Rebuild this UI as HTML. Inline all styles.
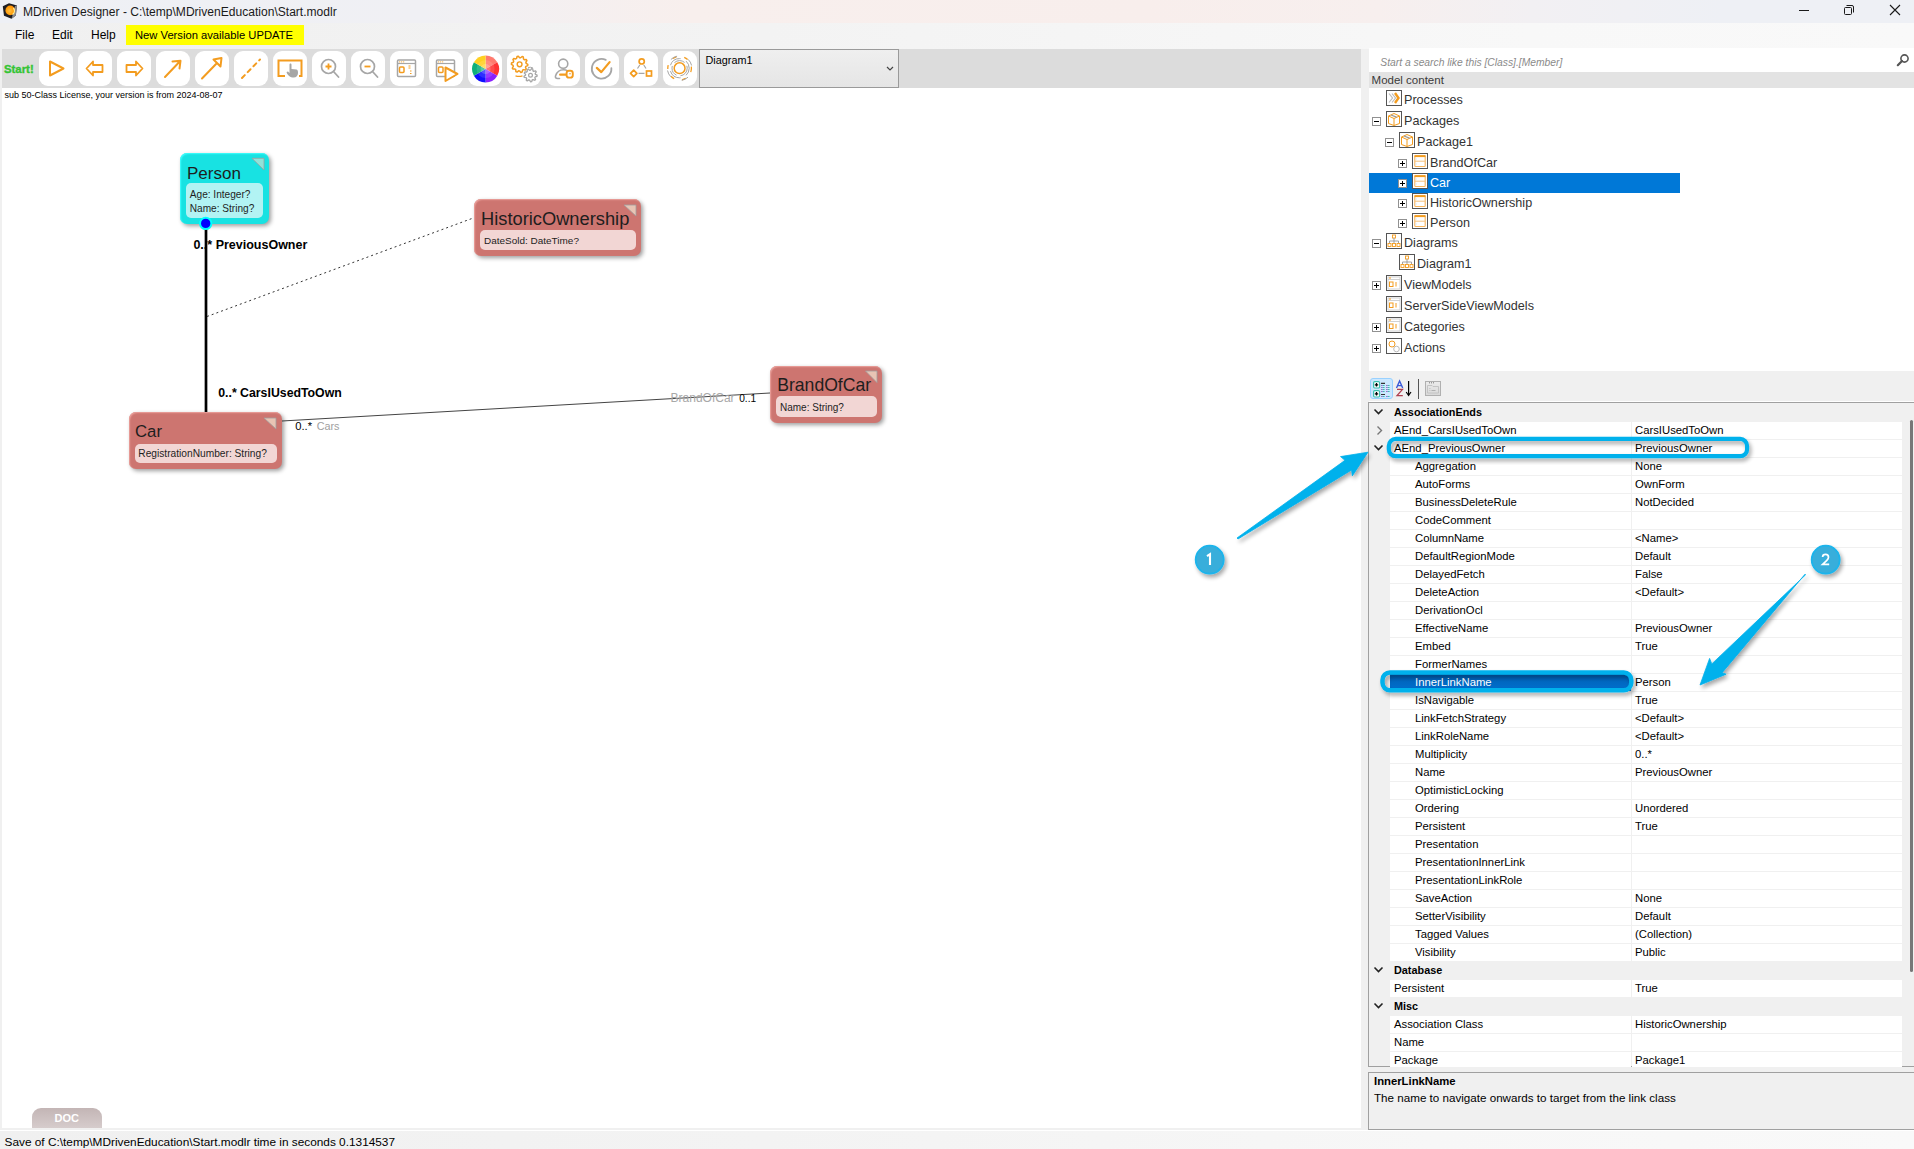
<!DOCTYPE html><html><head><meta charset="utf-8"><style>
html,body{margin:0;padding:0;}
body{width:1914px;height:1149px;overflow:hidden;position:relative;background:#fff;font-family:"Liberation Sans",sans-serif;}
.t{position:absolute;white-space:pre;}
.r{position:absolute;}
svg{position:absolute;overflow:visible;}
</style></head><body>
<div class="r" style="left:0px;top:0px;width:1914px;height:23px;background:linear-gradient(90deg,#eef0f5 0%,#f0f0f4 22%,#f8efed 36%,#f8eeec 60%,#f7efee 72%,#f2f0f3 80%,#eef0f5 90%,#eef0f5 100%);"></div>
<div class="t" style="left:23px;top:6px;font-size:12.07px;line-height:12.07px;color:#1a1a1a;font-weight:400;font-style:normal;">MDriven Designer - C:\temp\MDrivenEducation\Start.modlr</div>
<svg style="left:0;top:0" width="24" height="23" viewBox="0 0 24 23"><defs><radialGradient id="sph" cx="0.45" cy="0.55" r="0.6"><stop offset="0" stop-color="#ffc040"/><stop offset="0.6" stop-color="#ffa010"/><stop offset="1" stop-color="#ff8a00"/></radialGradient></defs><polygon points="2.8,6.2 9,3.2 17,5.4 15.8,15.5 11.5,18.8 4,15.8" fill="#1e1e22"/><polygon points="15,6 17,5.4 15.8,15.5 11.5,18.8 12.5,15.5" fill="#8a8a8e"/><circle cx="10.2" cy="10.4" r="4.8" fill="url(#sph)"/><path d="M13.5 8 A4.8 4.8 0 0 1 12.5 14.6" fill="none" stroke="#fff3a0" stroke-width="1.3"/></svg>
<div class="r" style="left:1799px;top:10px;width:10px;height:1px;background:#1a1a1a;"></div>
<svg style="left:1843px;top:4px" width="12" height="12" viewBox="0 0 12 12"><rect x="1.5" y="3.5" width="7" height="7" rx="1" fill="none" stroke="#1a1a1a" stroke-width="1"/><path d="M3.5 1.5 H9 a1.5 1.5 0 0 1 1.5 1.5 V8.5" fill="none" stroke="#1a1a1a" stroke-width="1"/></svg>
<svg style="left:1889px;top:4px" width="12" height="12" viewBox="0 0 12 12"><path d="M1 1 L11 11 M11 1 L1 11" stroke="#1a1a1a" stroke-width="1.1"/></svg>
<div class="r" style="left:0px;top:23px;width:1914px;height:26px;background:linear-gradient(90deg,#f0f0f0,#f3f3f3 40%,#f8f8f8 80%,#f9f9f9);"></div>
<div class="t" style="left:15px;top:29px;font-size:12px;line-height:12px;color:#000;font-weight:400;font-style:normal;">File</div>
<div class="t" style="left:52px;top:29px;font-size:12px;line-height:12px;color:#000;font-weight:400;font-style:normal;">Edit</div>
<div class="t" style="left:91px;top:29px;font-size:12px;line-height:12px;color:#000;font-weight:400;font-style:normal;">Help</div>
<div class="r" style="left:126px;top:25px;width:178px;height:20px;background:#ffff00;"></div>
<div class="t" style="left:135px;top:30px;font-size:11.21px;line-height:11.21px;color:#000;font-weight:400;font-style:normal;">New Version available UPDATE</div>
<div class="r" style="left:2px;top:49px;width:1359px;height:39px;background:#dcdcdc;"></div>
<div class="t" style="left:4px;top:64px;font-size:11.37px;line-height:11.37px;color:#34c434;font-weight:700;font-style:normal;-webkit-text-stroke:0.35px #34c434;">Start!</div>
<div class="r" style="left:39px;top:51px;width:34px;height:35px;background:#fff;border-radius:9px"></div>
<svg style="left:39px;top:51px" width="34" height="35" viewBox="0 0 34 35"><path d="M11 10.5 L11 24.5 L24.5 17.5 Z" fill="none" stroke="#f39c1f" stroke-width="2" stroke-linejoin="round"/></svg>
<div class="r" style="left:78px;top:51px;width:34px;height:35px;background:#fff;border-radius:9px"></div>
<svg style="left:78px;top:51px" width="34" height="35" viewBox="0 0 34 35"><path d="M8.5 17.5 L15 10.5 L15 14 L24.5 14 L24.5 21 L15 21 L15 24.5 Z" fill="none" stroke="#f39c1f" stroke-width="1.8" stroke-linejoin="round"/></svg>
<div class="r" style="left:117px;top:51px;width:34px;height:35px;background:#fff;border-radius:9px"></div>
<svg style="left:117px;top:51px" width="34" height="35" viewBox="0 0 34 35"><path d="M25.5 17.5 L19 10.5 L19 14 L9.5 14 L9.5 21 L19 21 L19 24.5 Z" fill="none" stroke="#f39c1f" stroke-width="1.8" stroke-linejoin="round"/></svg>
<div class="r" style="left:156px;top:51px;width:34px;height:35px;background:#fff;border-radius:9px"></div>
<svg style="left:156px;top:51px" width="34" height="35" viewBox="0 0 34 35"><path d="M9 26 L24.5 9.8 M16.5 10.5 L24.5 9.8 L23.5 17.5" fill="none" stroke="#f39c1f" stroke-width="2" stroke-linecap="round" stroke-linejoin="round"/></svg>
<div class="r" style="left:195px;top:51px;width:34px;height:35px;background:#fff;border-radius:9px"></div>
<svg style="left:195px;top:51px" width="34" height="35" viewBox="0 0 34 35"><path d="M7 27.5 L22 12 M18.5 8.5 L26.5 7 L25.5 15.5 Z" fill="none" stroke="#f39c1f" stroke-width="2" stroke-linecap="round" stroke-linejoin="round"/></svg>
<div class="r" style="left:234px;top:51px;width:34px;height:35px;background:#fff;border-radius:9px"></div>
<svg style="left:234px;top:51px" width="34" height="35" viewBox="0 0 34 35"><path d="M8 27 L26 8.5" fill="none" stroke="#f39c1f" stroke-width="2" stroke-linecap="round" stroke-dasharray="4 4.2"/></svg>
<div class="r" style="left:273px;top:51px;width:34px;height:35px;background:#fff;border-radius:9px"></div>
<svg style="left:273px;top:51px" width="34" height="35" viewBox="0 0 34 35"><path d="M12 25 L5.5 25 L5.5 9.5 L28.5 9.5 L28.5 25 L26 25" fill="none" stroke="#f39c1f" stroke-width="2"/><path d="M19.5 26.5 C16 26 14 23 13.5 21 L15 20.5 L16.5 22 L16.5 13.5 C16.5 12 18.5 12 18.5 13.5 L18.5 18 L23.5 18.5 C25 19 25 21 25 22 C25 25 23 27 19.5 26.5 Z" fill="#a6a6a6"/></svg>
<div class="r" style="left:312px;top:51px;width:34px;height:35px;background:#fff;border-radius:9px"></div>
<svg style="left:312px;top:51px" width="34" height="35" viewBox="0 0 34 35"><circle cx="16.5" cy="15.5" r="7" fill="none" stroke="#a6a6a6" stroke-width="1.7"/><path d="M21.5 20.5 L26.5 26" stroke="#a6a6a6" stroke-width="1.8" stroke-linecap="round"/><path d="M13.5 15.5 H19.5 M16.5 12.5 V18.5" stroke="#f39c1f" stroke-width="1.8"/></svg>
<div class="r" style="left:351px;top:51px;width:34px;height:35px;background:#fff;border-radius:9px"></div>
<svg style="left:351px;top:51px" width="34" height="35" viewBox="0 0 34 35"><circle cx="16.5" cy="15.5" r="7" fill="none" stroke="#a6a6a6" stroke-width="1.7"/><path d="M21.5 20.5 L26.5 26" stroke="#a6a6a6" stroke-width="1.8" stroke-linecap="round"/><path d="M13.5 15.5 H19.5" stroke="#f39c1f" stroke-width="1.8"/></svg>
<div class="r" style="left:390px;top:51px;width:34px;height:35px;background:#fff;border-radius:9px"></div>
<svg style="left:390px;top:51px" width="34" height="35" viewBox="0 0 34 35"><rect x="7.5" y="9" width="18" height="16.5" rx="1" fill="none" stroke="#a6a6a6" stroke-width="1.5"/><path d="M7.5 12.5 H25.5" stroke="#a6a6a6" stroke-width="1.2"/><path d="M9.2 10.9 h1 M11.2 10.9 h1 M13.2 10.9 h1" stroke="#f39c1f" stroke-width="1"/><rect x="9.5" y="16" width="4.5" height="5.5" rx="1" fill="none" stroke="#f39c1f" stroke-width="1.5"/><path d="M18.5 15 h2 M18.5 17 h2 M20 20 h1.5 M20 22.5 h1.5" stroke="#f39c1f" stroke-width="1"/></svg>
<div class="r" style="left:429px;top:51px;width:34px;height:35px;background:#fff;border-radius:9px"></div>
<svg style="left:429px;top:51px" width="34" height="35" viewBox="0 0 34 35"><rect x="7.5" y="9" width="18" height="16.5" rx="1" fill="none" stroke="#a6a6a6" stroke-width="1.5"/><path d="M7.5 12.5 H25.5" stroke="#a6a6a6" stroke-width="1.2"/><path d="M9.2 10.9 h1 M11.2 10.9 h1 M13.2 10.9 h1" stroke="#f39c1f" stroke-width="1"/><rect x="9.5" y="16" width="4.5" height="5.5" rx="1" fill="none" stroke="#f39c1f" stroke-width="1.5"/><path d="M16.5 16.5 L16.5 30 L28.5 23 Z" fill="#fff" stroke="#f39c1f" stroke-width="2" stroke-linejoin="round"/></svg>
<div class="r" style="left:468px;top:51px;width:34px;height:35px;background:#fff;border-radius:9px"></div>
<svg style="left:468px;top:51px" width="34" height="35" viewBox="0 0 34 35"><path d="M17.6 18.1 L17.60 4.60 A13.5 13.5 0 0 1 29.29 11.35 Z" fill="#ff7a6e"/><path d="M17.6 18.1 L29.29 11.35 A13.5 13.5 0 0 1 29.29 24.85 Z" fill="#ff3434"/><path d="M17.6 18.1 L29.29 24.85 A13.5 13.5 0 0 1 17.60 31.60 Z" fill="#8a20ff"/><path d="M17.6 18.1 L17.60 31.60 A13.5 13.5 0 0 1 5.91 24.85 Z" fill="#1010ff"/><path d="M17.6 18.1 L5.91 24.85 A13.5 13.5 0 0 1 5.91 11.35 Z" fill="#10b07a"/><path d="M17.6 18.1 L5.91 11.35 A13.5 13.5 0 0 1 17.60 4.60 Z" fill="#ffd020"/><circle cx="17.6" cy="18.1" r="9" fill="#fff" opacity="0.12"/><circle cx="17.6" cy="18.1" r="5" fill="#fff" opacity="0.2"/></svg>
<div class="r" style="left:507px;top:51px;width:34px;height:35px;background:#fff;border-radius:9px"></div>
<svg style="left:507px;top:51px" width="34" height="35" viewBox="0 0 34 35"><polygon points="20.80,13.30 20.70,14.58 18.88,15.34 18.48,16.30 19.23,18.12 18.40,19.10 16.48,18.64 15.60,19.18 15.13,21.10 13.88,21.40 12.60,19.90 11.57,19.82 10.07,21.10 8.88,20.61 8.72,18.64 7.93,17.97 5.97,18.12 5.29,17.02 6.32,15.34 6.08,14.33 4.40,13.30 4.50,12.02 6.32,11.26 6.72,10.30 5.97,8.48 6.80,7.50 8.72,7.96 9.60,7.42 10.07,5.50 11.32,5.20 12.60,6.70 13.63,6.78 15.13,5.50 16.32,5.99 16.48,7.96 17.27,8.63 19.23,8.48 19.91,9.58 18.88,11.26 19.12,12.27" fill="none" stroke="#f39c1f" stroke-width="1.5" stroke-linejoin="round"/><circle cx="12.6" cy="13.3" r="2.4" fill="none" stroke="#f39c1f" stroke-width="1.4"/><path d="M8.5 24.8 Q12 26 15.5 24.8" fill="none" stroke="#f39c1f" stroke-width="1.3"/><polygon points="30.10,24.20 30.00,25.35 28.20,25.91 27.83,26.70 28.56,28.44 27.74,29.26 26.00,28.53 25.21,28.90 24.65,30.70 23.50,30.80 22.63,29.12 21.79,28.90 20.20,29.92 19.26,29.26 19.67,27.41 19.17,26.70 17.30,26.46 17.00,25.35 18.50,24.20 18.58,23.33 17.30,21.94 17.78,20.90 19.67,20.99 20.29,20.37 20.20,18.48 21.24,18.00 22.63,19.28 23.50,19.20 24.65,17.70 25.76,18.00 26.00,19.87 26.71,20.37 28.56,19.96 29.22,20.90 28.20,22.49 28.42,23.33" fill="none" stroke="#a6a6a6" stroke-width="1.3" stroke-linejoin="round"/><circle cx="23.5" cy="24.2" r="1.9" fill="none" stroke="#a6a6a6" stroke-width="1.2"/><path d="M21 16.5 Q23.5 15.8 26 17" fill="none" stroke="#a6a6a6" stroke-width="1"/></svg>
<div class="r" style="left:546px;top:51px;width:34px;height:35px;background:#fff;border-radius:9px"></div>
<svg style="left:546px;top:51px" width="34" height="35" viewBox="0 0 34 35"><circle cx="17.2" cy="12.7" r="4.6" fill="none" stroke="#a6a6a6" stroke-width="1.6"/><path d="M13.5 27.5 H11.5 C9.8 27.5 9 26.5 9.6 24.8 C11 20.8 14 18.8 17.5 18.8 C19 18.8 20.3 19 21.2 19.6" fill="none" stroke="#a6a6a6" stroke-width="1.6" stroke-linecap="round"/><path d="M14.2 23.6 H21" stroke="#f39c1f" stroke-width="2.4" stroke-linecap="round"/><rect x="20.6" y="19.8" width="6.2" height="6.8" rx="2.4" fill="#fff" stroke="#f39c1f" stroke-width="1.9"/><circle cx="24" cy="22.8" r="0.8" fill="#f39c1f"/></svg>
<div class="r" style="left:585px;top:51px;width:34px;height:35px;background:#fff;border-radius:9px"></div>
<svg style="left:585px;top:51px" width="34" height="35" viewBox="0 0 34 35"><path d="M20.74 8.92 A9.8 9.8 0 1 0 26.38 17.2" fill="none" stroke="#a6a6a6" stroke-width="1.8" stroke-linecap="round"/><path d="M11.8 16.9 L16.3 21.1 L24.6 11.1" fill="none" stroke="#f39c1f" stroke-width="2.2" stroke-linecap="round" stroke-linejoin="round"/></svg>
<div class="r" style="left:624px;top:51px;width:34px;height:35px;background:#fff;border-radius:9px"></div>
<svg style="left:624px;top:51px" width="34" height="35" viewBox="0 0 34 35"><circle cx="17.7" cy="10.4" r="2.6" fill="none" stroke="#f39c1f" stroke-width="1.7"/><path d="M9.7 19.2 L12.9 22.4 L9.7 25.6 L6.5 22.4 Z" fill="none" stroke="#f39c1f" stroke-width="1.7" stroke-linejoin="round"/><rect x="22.5" y="20" width="5" height="5" fill="none" stroke="#f39c1f" stroke-width="1.7"/><path d="M15.8 14 L13.5 17.5 M19.8 14 L22 17.5 M14.5 22.4 H20.5" stroke="#a6a6a6" stroke-width="1.2"/></svg>
<div class="r" style="left:663px;top:51px;width:34px;height:35px;background:#fff;border-radius:9px"></div>
<svg style="left:663px;top:51px" width="34" height="35" viewBox="0 0 34 35"><circle cx="16.6" cy="17.2" r="5.4" fill="none" stroke="#f39c1f" stroke-width="1.5"/><circle cx="16.6" cy="17.2" r="7.6" fill="none" stroke="#a6a6a6" stroke-width="1" stroke-dasharray="11 4"/><circle cx="16.6" cy="17.2" r="9.6" fill="none" stroke="#a6a6a6" stroke-width="1" stroke-dasharray="13 6" stroke-dashoffset="5"/><circle cx="16.6" cy="17.2" r="11.8" fill="none" stroke="#f39c1f" stroke-width="1.3" stroke-dasharray="4 8"/><circle cx="16.6" cy="17.2" r="12.3" fill="none" stroke="#a6a6a6" stroke-width="1" stroke-dasharray="7 12" stroke-dashoffset="9"/></svg>
<div class="r" style="left:699px;top:49px;width:198px;height:37px;background:linear-gradient(#efefef,#e5e5e5);border:1px solid #9a9a9a"></div>
<div class="t" style="left:705.5px;top:55px;font-size:10.84px;line-height:10.84px;color:#000;font-weight:400;font-style:normal;">Diagram1</div>
<svg style="left:885px;top:65px" width="10" height="8" viewBox="0 0 10 8"><path d="M2 2 L5 5 L8 2" fill="none" stroke="#444" stroke-width="1.2"/></svg>
<div class="r" style="left:0px;top:49px;width:2px;height:1079px;background:#f0f0f0;"></div>
<div class="t" style="left:4.5px;top:91px;font-size:9.0px;line-height:9.0px;color:#000;font-weight:400;font-style:normal;">sub 50-Class License, your version is from 2024-08-07</div>
<div class="r" style="left:0px;top:1128px;width:1914px;height:2px;background:#f0f0f0;"></div>
<div class="r" style="left:0px;top:1130px;width:1914px;height:1px;background:#ffffff;"></div>
<div class="r" style="left:0px;top:1131px;width:1914px;height:18px;background:linear-gradient(90deg,#f0f0f0,#f3f3f3 40%,#f7f7f7 75%,#f9f9f9);"></div>
<div class="t" style="left:4.5px;top:1137px;font-size:11.84px;line-height:11.84px;color:#000;font-weight:400;font-style:normal;">Save of C:\temp\MDrivenEducation\Start.modlr time in seconds 0.1314537</div>
<div class="r" style="left:32px;top:1108px;width:70px;height:20px;border-radius:9px 9px 0 0;background:linear-gradient(#c3b5b5,#d6cccc)"></div>
<div class="t" style="left:54.5px;top:1113px;font-size:11px;line-height:11px;color:#fff;font-weight:700;font-style:normal;">DOC</div>
<div class="r" style="left:1361px;top:49px;width:8px;height:1079px;background:#f0f0f0;"></div>
<div class="r" style="left:1369px;top:49px;width:545px;height:1079px;background:#f0f0f0;"></div>
<div class="r" style="left:1369px;top:48px;width:545px;height:24px;background:#ffffff;"></div>
<div class="t" style="left:1380.3px;top:58px;font-size:10.3px;line-height:10.3px;color:#8a8a8a;font-weight:400;font-style:italic;">Start a search like this [Class].[Member]</div>
<svg style="left:1896px;top:53px" width="14" height="14" viewBox="0 0 14 14"><circle cx="8.5" cy="5.5" r="3.6" fill="none" stroke="#555" stroke-width="1.6"/><path d="M6 8 L1.8 12.2" stroke="#555" stroke-width="2.2" stroke-linecap="round"/></svg>
<div class="r" style="left:1369px;top:72px;width:545px;height:16px;background:#e3e3e3;"></div>
<div class="t" style="left:1371.6px;top:75px;font-size:11.5px;line-height:11.5px;color:#3a3a3a;font-weight:400;font-style:normal;">Model content</div>
<div class="r" style="left:1369px;top:88px;width:545px;height:283px;background:#ffffff;"></div>
<div class="r" style="left:1369px;top:173px;width:311px;height:20px;background:#0078d7;"></div>
<svg style="left:1386px;top:90px" width="16" height="16" viewBox="0 0 16 16"><rect x="0.5" y="0.5" width="15" height="15" fill="#fff" stroke="#555" stroke-width="1"/><path d="M3 3.5 L6.5 8 L3 12.5 M6 3.5 L9.5 8 L6 12.5" fill="none" stroke="#bbb" stroke-width="1.2"/><path d="M9 3 L12.5 8 L9 13" fill="none" stroke="#f39c1f" stroke-width="2.4"/></svg>
<div class="t" style="left:1404px;top:94px;font-size:12.6px;line-height:12.6px;color:#333;font-weight:400;font-style:normal;">Processes</div>
<svg style="left:1372px;top:117px" width="9" height="9" viewBox="0 0 9 9"><rect x="0.5" y="0.5" width="8" height="8" fill="#fff" stroke="#919191" stroke-width="1"/><path d="M2 4.5 H7" stroke="#000" stroke-width="1"/></svg>
<svg style="left:1386px;top:111px" width="16" height="16" viewBox="0 0 16 16"><rect x="0.5" y="0.5" width="15" height="15" fill="#fff" stroke="#555" stroke-width="1"/><path d="M2.5 5 L8 2.5 L13.5 5 L13.5 12.5 L8 14.5 L2.5 12.5 Z M2.5 5 L8 7.5 L13.5 5 M8 7.5 V14.5" fill="none" stroke="#f39c1f" stroke-width="1"/><path d="M5 4 L10.5 6.2" stroke="#999" stroke-width="1.3"/></svg>
<div class="t" style="left:1404px;top:115px;font-size:12.6px;line-height:12.6px;color:#333;font-weight:400;font-style:normal;">Packages</div>
<svg style="left:1385px;top:138px" width="9" height="9" viewBox="0 0 9 9"><rect x="0.5" y="0.5" width="8" height="8" fill="#fff" stroke="#919191" stroke-width="1"/><path d="M2 4.5 H7" stroke="#000" stroke-width="1"/></svg>
<svg style="left:1399px;top:132px" width="16" height="16" viewBox="0 0 16 16"><rect x="0.5" y="0.5" width="15" height="15" fill="#fff" stroke="#555" stroke-width="1"/><path d="M2.5 5 L8 2.5 L13.5 5 L13.5 12.5 L8 14.5 L2.5 12.5 Z M2.5 5 L8 7.5 L13.5 5 M8 7.5 V14.5" fill="none" stroke="#f39c1f" stroke-width="1"/><path d="M5 4 L10.5 6.2" stroke="#999" stroke-width="1.3"/></svg>
<div class="t" style="left:1417px;top:136px;font-size:12.6px;line-height:12.6px;color:#333;font-weight:400;font-style:normal;">Package1</div>
<svg style="left:1398px;top:159px" width="9" height="9" viewBox="0 0 9 9"><rect x="0.5" y="0.5" width="8" height="8" fill="#fff" stroke="#919191" stroke-width="1"/><path d="M2 4.5 H7 M4.5 2 V7" stroke="#000" stroke-width="1"/></svg>
<svg style="left:1412px;top:153px" width="16" height="16" viewBox="0 0 16 16"><rect x="0.5" y="0.5" width="15" height="15" fill="#fff" stroke="#555" stroke-width="1"/><rect x="2.8" y="2.5" width="10.4" height="11" rx="0.8" fill="none" stroke="#f7b45c" stroke-width="1.1"/><path d="M2.5 3.2 H13.5" stroke="#f39c1f" stroke-width="1.8"/><path d="M3 8.2 H13" stroke="#f6c07a" stroke-width="1"/><path d="M4 5 v2 M4 10 v2" stroke="#dde6f0" stroke-width="0.9"/></svg>
<div class="t" style="left:1430px;top:157px;font-size:12.6px;line-height:12.6px;color:#333;font-weight:400;font-style:normal;">BrandOfCar</div>
<svg style="left:1398px;top:179px" width="9" height="9" viewBox="0 0 9 9"><rect x="0.5" y="0.5" width="8" height="8" fill="#fff" stroke="#919191" stroke-width="1"/><path d="M2 4.5 H7 M4.5 2 V7" stroke="#000" stroke-width="1"/></svg>
<svg style="left:1412px;top:173px" width="16" height="16" viewBox="0 0 16 16"><rect x="0.5" y="0.5" width="15" height="15" fill="#fff" stroke="#555" stroke-width="1"/><rect x="2.8" y="2.5" width="10.4" height="11" rx="0.8" fill="none" stroke="#f7b45c" stroke-width="1.1"/><path d="M2.5 3.2 H13.5" stroke="#f39c1f" stroke-width="1.8"/><path d="M3 8.2 H13" stroke="#f6c07a" stroke-width="1"/><path d="M4 5 v2 M4 10 v2" stroke="#dde6f0" stroke-width="0.9"/></svg>
<div class="t" style="left:1430px;top:177px;font-size:12.6px;line-height:12.6px;color:#fff;font-weight:400;font-style:normal;">Car</div>
<svg style="left:1398px;top:199px" width="9" height="9" viewBox="0 0 9 9"><rect x="0.5" y="0.5" width="8" height="8" fill="#fff" stroke="#919191" stroke-width="1"/><path d="M2 4.5 H7 M4.5 2 V7" stroke="#000" stroke-width="1"/></svg>
<svg style="left:1412px;top:193px" width="16" height="16" viewBox="0 0 16 16"><rect x="0.5" y="0.5" width="15" height="15" fill="#fff" stroke="#555" stroke-width="1"/><rect x="2.8" y="2.5" width="10.4" height="11" rx="0.8" fill="none" stroke="#f7b45c" stroke-width="1.1"/><path d="M2.5 3.2 H13.5" stroke="#f39c1f" stroke-width="1.8"/><path d="M3 8.2 H13" stroke="#f6c07a" stroke-width="1"/><path d="M4 5 v2 M4 10 v2" stroke="#dde6f0" stroke-width="0.9"/></svg>
<div class="t" style="left:1430px;top:197px;font-size:12.6px;line-height:12.6px;color:#333;font-weight:400;font-style:normal;">HistoricOwnership</div>
<svg style="left:1398px;top:219px" width="9" height="9" viewBox="0 0 9 9"><rect x="0.5" y="0.5" width="8" height="8" fill="#fff" stroke="#919191" stroke-width="1"/><path d="M2 4.5 H7 M4.5 2 V7" stroke="#000" stroke-width="1"/></svg>
<svg style="left:1412px;top:213px" width="16" height="16" viewBox="0 0 16 16"><rect x="0.5" y="0.5" width="15" height="15" fill="#fff" stroke="#555" stroke-width="1"/><rect x="2.8" y="2.5" width="10.4" height="11" rx="0.8" fill="none" stroke="#f7b45c" stroke-width="1.1"/><path d="M2.5 3.2 H13.5" stroke="#f39c1f" stroke-width="1.8"/><path d="M3 8.2 H13" stroke="#f6c07a" stroke-width="1"/><path d="M4 5 v2 M4 10 v2" stroke="#dde6f0" stroke-width="0.9"/></svg>
<div class="t" style="left:1430px;top:217px;font-size:12.6px;line-height:12.6px;color:#333;font-weight:400;font-style:normal;">Person</div>
<svg style="left:1372px;top:239px" width="9" height="9" viewBox="0 0 9 9"><rect x="0.5" y="0.5" width="8" height="8" fill="#fff" stroke="#919191" stroke-width="1"/><path d="M2 4.5 H7" stroke="#000" stroke-width="1"/></svg>
<svg style="left:1386px;top:233px" width="16" height="16" viewBox="0 0 16 16"><rect x="0.5" y="0.5" width="15" height="15" fill="#fff" stroke="#555" stroke-width="1"/><rect x="6.5" y="2" width="3" height="3" fill="none" stroke="#f39c1f" stroke-width="0.9"/><path d="M8 5 V8 M3.5 8 H12.5 M3.5 8 V10 M8 8 V10 M12.5 8 V10" fill="none" stroke="#999" stroke-width="0.9"/><rect x="2" y="10.5" width="3" height="3" fill="none" stroke="#f39c1f" stroke-width="0.9"/><rect x="6.5" y="10.5" width="3" height="3" fill="none" stroke="#f39c1f" stroke-width="0.9"/><rect x="11" y="10.5" width="3" height="3" fill="none" stroke="#f39c1f" stroke-width="0.9"/></svg>
<div class="t" style="left:1404px;top:237px;font-size:12.6px;line-height:12.6px;color:#333;font-weight:400;font-style:normal;">Diagrams</div>
<svg style="left:1399px;top:254px" width="16" height="16" viewBox="0 0 16 16"><rect x="0.5" y="0.5" width="15" height="15" fill="#fff" stroke="#555" stroke-width="1"/><rect x="6.5" y="2" width="3" height="3" fill="none" stroke="#f39c1f" stroke-width="0.9"/><path d="M8 5 V8 M3.5 8 H12.5 M3.5 8 V10 M8 8 V10 M12.5 8 V10" fill="none" stroke="#999" stroke-width="0.9"/><rect x="2" y="10.5" width="3" height="3" fill="none" stroke="#f39c1f" stroke-width="0.9"/><rect x="6.5" y="10.5" width="3" height="3" fill="none" stroke="#f39c1f" stroke-width="0.9"/><rect x="11" y="10.5" width="3" height="3" fill="none" stroke="#f39c1f" stroke-width="0.9"/></svg>
<div class="t" style="left:1417px;top:258px;font-size:12.6px;line-height:12.6px;color:#333;font-weight:400;font-style:normal;">Diagram1</div>
<svg style="left:1372px;top:281px" width="9" height="9" viewBox="0 0 9 9"><rect x="0.5" y="0.5" width="8" height="8" fill="#fff" stroke="#919191" stroke-width="1"/><path d="M2 4.5 H7 M4.5 2 V7" stroke="#000" stroke-width="1"/></svg>
<svg style="left:1386px;top:275px" width="16" height="16" viewBox="0 0 16 16"><rect x="0.5" y="0.5" width="15" height="15" fill="#fff" stroke="#555" stroke-width="1"/><rect x="2" y="2" width="12" height="12" fill="none" stroke="#ccc" stroke-width="0.9"/><path d="M2 4.5 H14" stroke="#ccc" stroke-width="0.9"/><path d="M3 3 h2" stroke="#f39c1f" stroke-width="1"/><rect x="3.5" y="7" width="3.5" height="4.5" fill="none" stroke="#f39c1f" stroke-width="1"/><path d="M10 7 v4.5" stroke="#f39c1f" stroke-width="1"/></svg>
<div class="t" style="left:1404px;top:279px;font-size:12.6px;line-height:12.6px;color:#333;font-weight:400;font-style:normal;">ViewModels</div>
<svg style="left:1386px;top:296px" width="16" height="16" viewBox="0 0 16 16"><rect x="0.5" y="0.5" width="15" height="15" fill="#fff" stroke="#555" stroke-width="1"/><rect x="2" y="2" width="12" height="12" fill="none" stroke="#ccc" stroke-width="0.9"/><path d="M2 4.5 H14" stroke="#ccc" stroke-width="0.9"/><path d="M3 3 h2" stroke="#f39c1f" stroke-width="1"/><rect x="3.5" y="7" width="3.5" height="4.5" fill="none" stroke="#f39c1f" stroke-width="1"/><path d="M10 7 v4.5" stroke="#f39c1f" stroke-width="1"/></svg>
<div class="t" style="left:1404px;top:300px;font-size:12.6px;line-height:12.6px;color:#333;font-weight:400;font-style:normal;">ServerSideViewModels</div>
<svg style="left:1372px;top:323px" width="9" height="9" viewBox="0 0 9 9"><rect x="0.5" y="0.5" width="8" height="8" fill="#fff" stroke="#919191" stroke-width="1"/><path d="M2 4.5 H7 M4.5 2 V7" stroke="#000" stroke-width="1"/></svg>
<svg style="left:1386px;top:317px" width="16" height="16" viewBox="0 0 16 16"><rect x="0.5" y="0.5" width="15" height="15" fill="#fff" stroke="#555" stroke-width="1"/><rect x="2" y="2" width="12" height="12" fill="none" stroke="#ccc" stroke-width="0.9"/><path d="M2 4.5 H14" stroke="#ccc" stroke-width="0.9"/><path d="M3 3 h2" stroke="#f39c1f" stroke-width="1"/><rect x="3.5" y="7" width="3.5" height="4.5" fill="none" stroke="#f39c1f" stroke-width="1"/><path d="M10 7 v4.5" stroke="#f39c1f" stroke-width="1"/></svg>
<div class="t" style="left:1404px;top:321px;font-size:12.6px;line-height:12.6px;color:#333;font-weight:400;font-style:normal;">Categories</div>
<svg style="left:1372px;top:344px" width="9" height="9" viewBox="0 0 9 9"><rect x="0.5" y="0.5" width="8" height="8" fill="#fff" stroke="#919191" stroke-width="1"/><path d="M2 4.5 H7 M4.5 2 V7" stroke="#000" stroke-width="1"/></svg>
<svg style="left:1386px;top:338px" width="16" height="16" viewBox="0 0 16 16"><rect x="0.5" y="0.5" width="15" height="15" fill="#fff" stroke="#555" stroke-width="1"/><circle cx="6" cy="6" r="3" fill="none" stroke="#f39c1f" stroke-width="1"/><circle cx="10.5" cy="11" r="2.8" fill="none" stroke="#bbb" stroke-width="1"/></svg>
<div class="t" style="left:1404px;top:342px;font-size:12.6px;line-height:12.6px;color:#333;font-weight:400;font-style:normal;">Actions</div>
<div class="r" style="left:1370px;top:378px;width:23px;height:21px;background:#cce8ff;border:1px solid #99d1ff;border-radius:3px;box-sizing:border-box"></div>
<svg style="left:1373px;top:381px" width="18" height="17" viewBox="0 0 18 17"><rect x="0.6" y="0.6" width="6" height="6.4" rx="1.2" fill="#fff" stroke="#3cc0b0" stroke-width="1.2"/><rect x="0.6" y="9.6" width="6" height="6.4" rx="1.2" fill="#fff" stroke="#3cc0b0" stroke-width="1.2"/><path d="M1.8 3.8 h3.4 M3.5 2.1 v3.4 M1.8 12.8 h3.4 M3.5 11.1 v3.4" stroke="#000" stroke-width="1.3"/><path d="M8 2.4 h4 M8 13.5 h4" stroke="#333" stroke-width="1.2"/><path d="M8 4.5 h1.8" stroke="#a070d0" stroke-width="1"/><path d="M9.8 4.5 h1.8" stroke="#40c0b0" stroke-width="1"/><path d="M13 4.5 h1.8" stroke="#a070d0" stroke-width="1"/><path d="M14.8 4.5 h1.8" stroke="#40c0b0" stroke-width="1"/><path d="M8 6.5 h1.8" stroke="#a070d0" stroke-width="1"/><path d="M9.8 6.5 h1.8" stroke="#40c0b0" stroke-width="1"/><path d="M13 6.5 h1.8" stroke="#a070d0" stroke-width="1"/><path d="M14.8 6.5 h1.8" stroke="#40c0b0" stroke-width="1"/><path d="M8 8.5 h1.8" stroke="#a070d0" stroke-width="1"/><path d="M9.8 8.5 h1.8" stroke="#40c0b0" stroke-width="1"/><path d="M13 8.5 h1.8" stroke="#a070d0" stroke-width="1"/><path d="M14.8 8.5 h1.8" stroke="#40c0b0" stroke-width="1"/><path d="M8 10.5 h1.8" stroke="#a070d0" stroke-width="1"/><path d="M9.8 10.5 h1.8" stroke="#40c0b0" stroke-width="1"/><path d="M13 10.5 h1.8" stroke="#a070d0" stroke-width="1"/><path d="M14.8 10.5 h1.8" stroke="#40c0b0" stroke-width="1"/><path d="M8 15.5 h1.8" stroke="#a070d0" stroke-width="1"/><path d="M9.8 15.5 h1.8" stroke="#40c0b0" stroke-width="1"/><path d="M13 15.5 h1.8" stroke="#a070d0" stroke-width="1"/><path d="M14.8 15.5 h1.8" stroke="#40c0b0" stroke-width="1"/></svg>
<svg style="left:1396px;top:380px" width="16" height="17" viewBox="0 0 16 17"><path d="M0.5 8 L3.6 1 L6.7 8 M1.7 5.6 H5.5" fill="none" stroke="#3a5ad8" stroke-width="1.4"/><path d="M1 9.3 H6.5 L1 15.7 H6.8" fill="none" stroke="#b04050" stroke-width="1.3"/><path d="M12.6 1 V15 M10.2 12 L12.6 15.5 L15 12" fill="none" stroke="#000" stroke-width="1.2"/></svg>
<div class="r" style="left:1418px;top:379px;width:1px;height:20px;background:#555;"></div>
<svg style="left:1425px;top:381px" width="16" height="15" viewBox="0 0 16 15"><defs><linearGradient id="wg" x1="0" y1="0" x2="0" y2="1"><stop offset="0" stop-color="#ececec"/><stop offset="1" stop-color="#d8d8d8"/></linearGradient></defs><rect x="0.5" y="0.5" width="15" height="14" fill="url(#wg)" stroke="#b0b0b0" stroke-width="1"/><path d="M4 1.8 h1 M6 1.8 h1 M8 1.8 h1" stroke="#777" stroke-width="1"/><path d="M2.5 4.5 H7 L8 5.5 H13.5 V12 H2.5 Z" fill="none" stroke="#c0c0c0" stroke-width="0.9"/><path d="M4.5 7.5 h0.8 M4.5 9.5 h0.8 M6.5 9.5 h4" stroke="#aaa" stroke-width="0.9"/></svg>
<div class="r" style="left:1369px;top:401px;width:545px;height:1px;background:#ffffff;"></div>
<div class="r" style="left:1368px;top:402px;width:560px;height:665px;border:1px solid #a0a0a0;box-sizing:border-box;background:#f0f0f0"></div>
<div class="t" style="left:1394px;top:407px;font-size:10.85px;line-height:10.85px;color:#000;font-weight:700;font-style:normal;">AssociationEnds</div>
<svg style="left:1373px;top:408px" width="11" height="8" viewBox="0 0 11 8"><path d="M1.5 1.5 L5.5 5.5 L9.5 1.5" fill="none" stroke="#222" stroke-width="1.6"/></svg>
<div class="r" style="left:1390px;top:422px;width:241px;height:17px;background:#fff;"></div>
<div class="r" style="left:1632px;top:422px;width:270px;height:17px;background:#fff;"></div>
<div class="t" style="left:1394px;top:425px;font-size:11.3px;line-height:11.3px;color:#000;font-weight:400;font-style:normal;">AEnd_CarsIUsedToOwn</div>
<div class="t" style="left:1635px;top:425px;font-size:11.3px;line-height:11.3px;color:#000;font-weight:400;font-style:normal;">CarsIUsedToOwn</div>
<svg style="left:1376px;top:425px" width="8" height="11" viewBox="0 0 8 11"><path d="M1.5 1.5 L5.5 5.5 L1.5 9.5" fill="none" stroke="#777" stroke-width="1.4"/></svg>
<div class="r" style="left:1390px;top:440px;width:241px;height:17px;background:#fff;"></div>
<div class="r" style="left:1632px;top:440px;width:270px;height:17px;background:#fff;"></div>
<div class="t" style="left:1394px;top:443px;font-size:11.3px;line-height:11.3px;color:#000;font-weight:400;font-style:normal;">AEnd_PreviousOwner</div>
<div class="t" style="left:1635px;top:443px;font-size:11.3px;line-height:11.3px;color:#000;font-weight:400;font-style:normal;">PreviousOwner</div>
<svg style="left:1373px;top:444px" width="11" height="8" viewBox="0 0 11 8"><path d="M1.5 1.5 L5.5 5.5 L9.5 1.5" fill="none" stroke="#222" stroke-width="1.6"/></svg>
<div class="r" style="left:1390px;top:458px;width:241px;height:17px;background:#fff;"></div>
<div class="r" style="left:1632px;top:458px;width:270px;height:17px;background:#fff;"></div>
<div class="t" style="left:1415px;top:461px;font-size:11.3px;line-height:11.3px;color:#000;font-weight:400;font-style:normal;">Aggregation</div>
<div class="t" style="left:1635px;top:461px;font-size:11.3px;line-height:11.3px;color:#000;font-weight:400;font-style:normal;">None</div>
<div class="r" style="left:1390px;top:476px;width:241px;height:17px;background:#fff;"></div>
<div class="r" style="left:1632px;top:476px;width:270px;height:17px;background:#fff;"></div>
<div class="t" style="left:1415px;top:479px;font-size:11.3px;line-height:11.3px;color:#000;font-weight:400;font-style:normal;">AutoForms</div>
<div class="t" style="left:1635px;top:479px;font-size:11.3px;line-height:11.3px;color:#000;font-weight:400;font-style:normal;">OwnForm</div>
<div class="r" style="left:1390px;top:494px;width:241px;height:17px;background:#fff;"></div>
<div class="r" style="left:1632px;top:494px;width:270px;height:17px;background:#fff;"></div>
<div class="t" style="left:1415px;top:497px;font-size:11.3px;line-height:11.3px;color:#000;font-weight:400;font-style:normal;">BusinessDeleteRule</div>
<div class="t" style="left:1635px;top:497px;font-size:11.3px;line-height:11.3px;color:#000;font-weight:400;font-style:normal;">NotDecided</div>
<div class="r" style="left:1390px;top:512px;width:241px;height:17px;background:#fff;"></div>
<div class="r" style="left:1632px;top:512px;width:270px;height:17px;background:#fff;"></div>
<div class="t" style="left:1415px;top:515px;font-size:11.3px;line-height:11.3px;color:#000;font-weight:400;font-style:normal;">CodeComment</div>
<div class="r" style="left:1390px;top:530px;width:241px;height:17px;background:#fff;"></div>
<div class="r" style="left:1632px;top:530px;width:270px;height:17px;background:#fff;"></div>
<div class="t" style="left:1415px;top:533px;font-size:11.3px;line-height:11.3px;color:#000;font-weight:400;font-style:normal;">ColumnName</div>
<div class="t" style="left:1635px;top:533px;font-size:11.3px;line-height:11.3px;color:#000;font-weight:400;font-style:normal;">&lt;Name&gt;</div>
<div class="r" style="left:1390px;top:548px;width:241px;height:17px;background:#fff;"></div>
<div class="r" style="left:1632px;top:548px;width:270px;height:17px;background:#fff;"></div>
<div class="t" style="left:1415px;top:551px;font-size:11.3px;line-height:11.3px;color:#000;font-weight:400;font-style:normal;">DefaultRegionMode</div>
<div class="t" style="left:1635px;top:551px;font-size:11.3px;line-height:11.3px;color:#000;font-weight:400;font-style:normal;">Default</div>
<div class="r" style="left:1390px;top:566px;width:241px;height:17px;background:#fff;"></div>
<div class="r" style="left:1632px;top:566px;width:270px;height:17px;background:#fff;"></div>
<div class="t" style="left:1415px;top:569px;font-size:11.3px;line-height:11.3px;color:#000;font-weight:400;font-style:normal;">DelayedFetch</div>
<div class="t" style="left:1635px;top:569px;font-size:11.3px;line-height:11.3px;color:#000;font-weight:400;font-style:normal;">False</div>
<div class="r" style="left:1390px;top:584px;width:241px;height:17px;background:#fff;"></div>
<div class="r" style="left:1632px;top:584px;width:270px;height:17px;background:#fff;"></div>
<div class="t" style="left:1415px;top:587px;font-size:11.3px;line-height:11.3px;color:#000;font-weight:400;font-style:normal;">DeleteAction</div>
<div class="t" style="left:1635px;top:587px;font-size:11.3px;line-height:11.3px;color:#000;font-weight:400;font-style:normal;">&lt;Default&gt;</div>
<div class="r" style="left:1390px;top:602px;width:241px;height:17px;background:#fff;"></div>
<div class="r" style="left:1632px;top:602px;width:270px;height:17px;background:#fff;"></div>
<div class="t" style="left:1415px;top:605px;font-size:11.3px;line-height:11.3px;color:#000;font-weight:400;font-style:normal;">DerivationOcl</div>
<div class="r" style="left:1390px;top:620px;width:241px;height:17px;background:#fff;"></div>
<div class="r" style="left:1632px;top:620px;width:270px;height:17px;background:#fff;"></div>
<div class="t" style="left:1415px;top:623px;font-size:11.3px;line-height:11.3px;color:#000;font-weight:400;font-style:normal;">EffectiveName</div>
<div class="t" style="left:1635px;top:623px;font-size:11.3px;line-height:11.3px;color:#000;font-weight:400;font-style:normal;">PreviousOwner</div>
<div class="r" style="left:1390px;top:638px;width:241px;height:17px;background:#fff;"></div>
<div class="r" style="left:1632px;top:638px;width:270px;height:17px;background:#fff;"></div>
<div class="t" style="left:1415px;top:641px;font-size:11.3px;line-height:11.3px;color:#000;font-weight:400;font-style:normal;">Embed</div>
<div class="t" style="left:1635px;top:641px;font-size:11.3px;line-height:11.3px;color:#000;font-weight:400;font-style:normal;">True</div>
<div class="r" style="left:1390px;top:656px;width:241px;height:17px;background:#fff;"></div>
<div class="r" style="left:1632px;top:656px;width:270px;height:17px;background:#fff;"></div>
<div class="t" style="left:1415px;top:659px;font-size:11.3px;line-height:11.3px;color:#000;font-weight:400;font-style:normal;">FormerNames</div>
<div class="r" style="left:1390px;top:674px;width:241px;height:17px;background:linear-gradient(#005fb3,#0070d0);"></div>
<div class="r" style="left:1632px;top:674px;width:270px;height:17px;background:#fff;"></div>
<div class="t" style="left:1415px;top:677px;font-size:11.3px;line-height:11.3px;color:#fff;font-weight:400;font-style:normal;">InnerLinkName</div>
<div class="t" style="left:1635px;top:677px;font-size:11.3px;line-height:11.3px;color:#000;font-weight:400;font-style:normal;">Person</div>
<div class="r" style="left:1390px;top:692px;width:241px;height:17px;background:#fff;"></div>
<div class="r" style="left:1632px;top:692px;width:270px;height:17px;background:#fff;"></div>
<div class="t" style="left:1415px;top:695px;font-size:11.3px;line-height:11.3px;color:#000;font-weight:400;font-style:normal;">IsNavigable</div>
<div class="t" style="left:1635px;top:695px;font-size:11.3px;line-height:11.3px;color:#000;font-weight:400;font-style:normal;">True</div>
<div class="r" style="left:1390px;top:710px;width:241px;height:17px;background:#fff;"></div>
<div class="r" style="left:1632px;top:710px;width:270px;height:17px;background:#fff;"></div>
<div class="t" style="left:1415px;top:713px;font-size:11.3px;line-height:11.3px;color:#000;font-weight:400;font-style:normal;">LinkFetchStrategy</div>
<div class="t" style="left:1635px;top:713px;font-size:11.3px;line-height:11.3px;color:#000;font-weight:400;font-style:normal;">&lt;Default&gt;</div>
<div class="r" style="left:1390px;top:728px;width:241px;height:17px;background:#fff;"></div>
<div class="r" style="left:1632px;top:728px;width:270px;height:17px;background:#fff;"></div>
<div class="t" style="left:1415px;top:731px;font-size:11.3px;line-height:11.3px;color:#000;font-weight:400;font-style:normal;">LinkRoleName</div>
<div class="t" style="left:1635px;top:731px;font-size:11.3px;line-height:11.3px;color:#000;font-weight:400;font-style:normal;">&lt;Default&gt;</div>
<div class="r" style="left:1390px;top:746px;width:241px;height:17px;background:#fff;"></div>
<div class="r" style="left:1632px;top:746px;width:270px;height:17px;background:#fff;"></div>
<div class="t" style="left:1415px;top:749px;font-size:11.3px;line-height:11.3px;color:#000;font-weight:400;font-style:normal;">Multiplicity</div>
<div class="t" style="left:1635px;top:749px;font-size:11.3px;line-height:11.3px;color:#000;font-weight:400;font-style:normal;">0..*</div>
<div class="r" style="left:1390px;top:764px;width:241px;height:17px;background:#fff;"></div>
<div class="r" style="left:1632px;top:764px;width:270px;height:17px;background:#fff;"></div>
<div class="t" style="left:1415px;top:767px;font-size:11.3px;line-height:11.3px;color:#000;font-weight:400;font-style:normal;">Name</div>
<div class="t" style="left:1635px;top:767px;font-size:11.3px;line-height:11.3px;color:#000;font-weight:400;font-style:normal;">PreviousOwner</div>
<div class="r" style="left:1390px;top:782px;width:241px;height:17px;background:#fff;"></div>
<div class="r" style="left:1632px;top:782px;width:270px;height:17px;background:#fff;"></div>
<div class="t" style="left:1415px;top:785px;font-size:11.3px;line-height:11.3px;color:#000;font-weight:400;font-style:normal;">OptimisticLocking</div>
<div class="r" style="left:1390px;top:800px;width:241px;height:17px;background:#fff;"></div>
<div class="r" style="left:1632px;top:800px;width:270px;height:17px;background:#fff;"></div>
<div class="t" style="left:1415px;top:803px;font-size:11.3px;line-height:11.3px;color:#000;font-weight:400;font-style:normal;">Ordering</div>
<div class="t" style="left:1635px;top:803px;font-size:11.3px;line-height:11.3px;color:#000;font-weight:400;font-style:normal;">Unordered</div>
<div class="r" style="left:1390px;top:818px;width:241px;height:17px;background:#fff;"></div>
<div class="r" style="left:1632px;top:818px;width:270px;height:17px;background:#fff;"></div>
<div class="t" style="left:1415px;top:821px;font-size:11.3px;line-height:11.3px;color:#000;font-weight:400;font-style:normal;">Persistent</div>
<div class="t" style="left:1635px;top:821px;font-size:11.3px;line-height:11.3px;color:#000;font-weight:400;font-style:normal;">True</div>
<div class="r" style="left:1390px;top:836px;width:241px;height:17px;background:#fff;"></div>
<div class="r" style="left:1632px;top:836px;width:270px;height:17px;background:#fff;"></div>
<div class="t" style="left:1415px;top:839px;font-size:11.3px;line-height:11.3px;color:#000;font-weight:400;font-style:normal;">Presentation</div>
<div class="r" style="left:1390px;top:854px;width:241px;height:17px;background:#fff;"></div>
<div class="r" style="left:1632px;top:854px;width:270px;height:17px;background:#fff;"></div>
<div class="t" style="left:1415px;top:857px;font-size:11.3px;line-height:11.3px;color:#000;font-weight:400;font-style:normal;">PresentationInnerLink</div>
<div class="r" style="left:1390px;top:872px;width:241px;height:17px;background:#fff;"></div>
<div class="r" style="left:1632px;top:872px;width:270px;height:17px;background:#fff;"></div>
<div class="t" style="left:1415px;top:875px;font-size:11.3px;line-height:11.3px;color:#000;font-weight:400;font-style:normal;">PresentationLinkRole</div>
<div class="r" style="left:1390px;top:890px;width:241px;height:17px;background:#fff;"></div>
<div class="r" style="left:1632px;top:890px;width:270px;height:17px;background:#fff;"></div>
<div class="t" style="left:1415px;top:893px;font-size:11.3px;line-height:11.3px;color:#000;font-weight:400;font-style:normal;">SaveAction</div>
<div class="t" style="left:1635px;top:893px;font-size:11.3px;line-height:11.3px;color:#000;font-weight:400;font-style:normal;">None</div>
<div class="r" style="left:1390px;top:908px;width:241px;height:17px;background:#fff;"></div>
<div class="r" style="left:1632px;top:908px;width:270px;height:17px;background:#fff;"></div>
<div class="t" style="left:1415px;top:911px;font-size:11.3px;line-height:11.3px;color:#000;font-weight:400;font-style:normal;">SetterVisibility</div>
<div class="t" style="left:1635px;top:911px;font-size:11.3px;line-height:11.3px;color:#000;font-weight:400;font-style:normal;">Default</div>
<div class="r" style="left:1390px;top:926px;width:241px;height:17px;background:#fff;"></div>
<div class="r" style="left:1632px;top:926px;width:270px;height:17px;background:#fff;"></div>
<div class="t" style="left:1415px;top:929px;font-size:11.3px;line-height:11.3px;color:#000;font-weight:400;font-style:normal;">Tagged Values</div>
<div class="t" style="left:1635px;top:929px;font-size:11.3px;line-height:11.3px;color:#000;font-weight:400;font-style:normal;">(Collection)</div>
<div class="r" style="left:1390px;top:944px;width:241px;height:17px;background:#fff;"></div>
<div class="r" style="left:1632px;top:944px;width:270px;height:17px;background:#fff;"></div>
<div class="t" style="left:1415px;top:947px;font-size:11.3px;line-height:11.3px;color:#000;font-weight:400;font-style:normal;">Visibility</div>
<div class="t" style="left:1635px;top:947px;font-size:11.3px;line-height:11.3px;color:#000;font-weight:400;font-style:normal;">Public</div>
<div class="t" style="left:1394px;top:965px;font-size:10.85px;line-height:10.85px;color:#000;font-weight:700;font-style:normal;">Database</div>
<svg style="left:1373px;top:966px" width="11" height="8" viewBox="0 0 11 8"><path d="M1.5 1.5 L5.5 5.5 L9.5 1.5" fill="none" stroke="#222" stroke-width="1.6"/></svg>
<div class="r" style="left:1390px;top:980px;width:241px;height:17px;background:#fff;"></div>
<div class="r" style="left:1632px;top:980px;width:270px;height:17px;background:#fff;"></div>
<div class="t" style="left:1394px;top:983px;font-size:11.3px;line-height:11.3px;color:#000;font-weight:400;font-style:normal;">Persistent</div>
<div class="t" style="left:1635px;top:983px;font-size:11.3px;line-height:11.3px;color:#000;font-weight:400;font-style:normal;">True</div>
<div class="t" style="left:1394px;top:1001px;font-size:10.85px;line-height:10.85px;color:#000;font-weight:700;font-style:normal;">Misc</div>
<svg style="left:1373px;top:1002px" width="11" height="8" viewBox="0 0 11 8"><path d="M1.5 1.5 L5.5 5.5 L9.5 1.5" fill="none" stroke="#222" stroke-width="1.6"/></svg>
<div class="r" style="left:1390px;top:1016px;width:241px;height:17px;background:#fff;"></div>
<div class="r" style="left:1632px;top:1016px;width:270px;height:17px;background:#fff;"></div>
<div class="t" style="left:1394px;top:1019px;font-size:11.3px;line-height:11.3px;color:#000;font-weight:400;font-style:normal;">Association Class</div>
<div class="t" style="left:1635px;top:1019px;font-size:11.3px;line-height:11.3px;color:#000;font-weight:400;font-style:normal;">HistoricOwnership</div>
<div class="r" style="left:1390px;top:1034px;width:241px;height:17px;background:#fff;"></div>
<div class="r" style="left:1632px;top:1034px;width:270px;height:17px;background:#fff;"></div>
<div class="t" style="left:1394px;top:1037px;font-size:11.3px;line-height:11.3px;color:#000;font-weight:400;font-style:normal;">Name</div>
<div class="r" style="left:1390px;top:1052px;width:241px;height:15px;background:#fff;"></div>
<div class="r" style="left:1632px;top:1052px;width:270px;height:15px;background:#fff;"></div>
<div class="t" style="left:1394px;top:1055px;font-size:11.3px;line-height:11.3px;color:#000;font-weight:400;font-style:normal;">Package</div>
<div class="t" style="left:1635px;top:1055px;font-size:11.3px;line-height:11.3px;color:#000;font-weight:400;font-style:normal;">Package1</div>
<div class="r" style="left:1910px;top:420px;width:3px;height:552px;background:#777;border-radius:1.5px"></div>
<div class="r" style="left:1368px;top:1072px;width:560px;height:58px;border:1px solid #a0a0a0;box-sizing:border-box;background:#f0f0f0"></div>
<div class="t" style="left:1374px;top:1076px;font-size:11.3px;line-height:11.3px;color:#000;font-weight:700;font-style:normal;">InnerLinkName</div>
<div class="t" style="left:1374px;top:1092px;font-size:11.63px;line-height:11.63px;color:#000;font-weight:400;font-style:normal;">The name to navigate onwards to target from the link class</div>
<svg style="left:0;top:0" width="1914" height="1149" viewBox="0 0 1914 1149"><path d="M206 223 V413" stroke="#000" stroke-width="2.7"/><path d="M207 316.5 L476 217" stroke="#333" stroke-width="1" stroke-dasharray="2 3"/><path d="M282 421 L770 393" stroke="#444" stroke-width="1"/></svg>
<div class="r" style="left:180px;top:153px;width:89px;height:71px;background:#18e2e2;border-radius:7px;box-shadow:2px 2px 4px rgba(0,0,0,0.38), inset 1px 1px 1.5px #40ffff"></div>
<div class="r" style="left:186px;top:183px;width:77px;height:35px;background:#b2f3f3;border-radius:5px"></div>
<svg style="left:0;top:0" width="1" height="1"><path d="M252 158.3 L264 158.3 L264 170 Z" fill="#90e2d8" stroke="#a0a0a0" stroke-width="0.8"/></svg>
<div class="t" style="left:187px;top:165px;font-size:17.04px;line-height:17.04px;color:#1e1e1e;font-weight:400;font-style:normal;">Person</div>
<div class="t" style="left:189.8px;top:190px;font-size:10.1px;line-height:10.1px;color:#1e1e1e;font-weight:400;font-style:normal;">Age: Integer?</div>
<div class="t" style="left:189.8px;top:204px;font-size:10.1px;line-height:10.1px;color:#1e1e1e;font-weight:400;font-style:normal;">Name: String?</div>
<div class="r" style="left:474px;top:199px;width:167px;height:57px;background:#cd7570;border-radius:7px;box-shadow:2px 2px 4px rgba(0,0,0,0.38), inset 1px 1px 1.5px #eca39e"></div>
<div class="r" style="left:480px;top:230px;width:156px;height:20px;background:#f2d6d4;border-radius:5px"></div>
<svg style="left:0;top:0" width="1" height="1"><path d="M624 205 L636 205 L636 216 Z" fill="#e8c4b4" stroke="#a0a0a0" stroke-width="0.8"/></svg>
<div class="t" style="left:481px;top:210px;font-size:18.3px;line-height:18.3px;color:#1e1e1e;font-weight:400;font-style:normal;">HistoricOwnership</div>
<div class="t" style="left:484px;top:236px;font-size:9.98px;line-height:9.98px;color:#1e1e1e;font-weight:400;font-style:normal;">DateSold: DateTime?</div>
<div class="r" style="left:129px;top:412px;width:153px;height:57px;background:#cd7570;border-radius:7px;box-shadow:2px 2px 4px rgba(0,0,0,0.38), inset 1px 1px 1.5px #eca39e"></div>
<div class="r" style="left:135px;top:443.5px;width:142px;height:19.5px;background:#f2d6d4;border-radius:5px"></div>
<svg style="left:0;top:0" width="1" height="1"><path d="M264 418 L276 418 L276 429 Z" fill="#e8c4b4" stroke="#a0a0a0" stroke-width="0.8"/></svg>
<div class="t" style="left:135px;top:424px;font-size:16.76px;line-height:16.76px;color:#1e1e1e;font-weight:400;font-style:normal;">Car</div>
<div class="t" style="left:138.3px;top:449px;font-size:10.2px;line-height:10.2px;color:#1e1e1e;font-weight:400;font-style:normal;">RegistrationNumber: String?</div>
<div class="r" style="left:770px;top:366px;width:112px;height:57px;background:#cd7570;border-radius:7px;box-shadow:2px 2px 4px rgba(0,0,0,0.38), inset 1px 1px 1.5px #eca39e"></div>
<div class="r" style="left:776px;top:396px;width:101px;height:21px;background:#f2d6d4;border-radius:5px"></div>
<svg style="left:0;top:0" width="1" height="1"><path d="M865.5 371 L877 371 L877 382.6 Z" fill="#e8c4b4" stroke="#a0a0a0" stroke-width="0.8"/></svg>
<div class="t" style="left:777.2px;top:377px;font-size:17.62px;line-height:17.62px;color:#1e1e1e;font-weight:400;font-style:normal;">BrandOfCar</div>
<div class="t" style="left:780px;top:403px;font-size:10.0px;line-height:10.0px;color:#1e1e1e;font-weight:400;font-style:normal;">Name: String?</div>
<svg style="left:0;top:0" width="1" height="1"><circle cx="205.7" cy="223.4" r="5.7" fill="#0000ff" stroke="#00ffff" stroke-width="2"/></svg>
<div class="t" style="left:193.4px;top:239px;font-size:12.51px;line-height:12.51px;color:#000;font-weight:700;font-style:normal;">0..* PreviousOwner</div>
<div class="t" style="left:218.2px;top:387px;font-size:12.32px;line-height:12.32px;color:#000;font-weight:700;font-style:normal;">0..* CarsIUsedToOwn</div>
<div class="t" style="left:295.2px;top:421px;font-size:11.2px;line-height:11.2px;color:#000;font-weight:400;font-style:normal;">0..*</div>
<div class="t" style="left:316.7px;top:421px;font-size:10.8px;line-height:10.8px;color:#a0a0a0;font-weight:400;font-style:normal;">Cars</div>
<div class="t" style="left:670.6px;top:392px;font-size:12.0px;line-height:12.0px;color:#a8a8a8;font-weight:400;font-style:normal;">BrandOfCar</div>
<div class="t" style="left:739.2px;top:394px;font-size:10.19px;line-height:10.19px;color:#000;font-weight:400;font-style:normal;">0..1</div>
<svg style="left:0;top:0" width="1914" height="1149" viewBox="0 0 1914 1149"><defs><filter id="sh" x="-20%" y="-50%" width="140%" height="200%"><feGaussianBlur in="SourceAlpha" stdDeviation="2.2"/><feOffset dx="2" dy="3"/><feComponentTransfer><feFuncA type="linear" slope="0.35"/></feComponentTransfer><feMerge><feMergeNode/><feMergeNode in="SourceGraphic"/></feMerge></filter><linearGradient id="cg" x1="0" y1="0" x2="0" y2="1"><stop offset="0" stop-color="#42b6e2"/><stop offset="1" stop-color="#33a6d6"/></linearGradient></defs><rect x="1388.8" y="438.9" width="358.3" height="17.3" rx="7" fill="none" stroke="#00b1ec" stroke-width="4.2" filter="url(#sh)"/><rect x="1382.5" y="672.5" width="248.8" height="17.8" rx="7.5" fill="none" stroke="#00b1ec" stroke-width="4.5" filter="url(#sh)"/><path d="M1237 538 L1345 460.3 L1340.5 456.6 L1368 452.2 L1352.3 475.9 L1351.6 470 L1238 539 Z" fill="#00b1ec" stroke="#00b1ec" stroke-width="0.8" stroke-linejoin="round" filter="url(#sh)"/><path d="M1805 574.2 L1722.2 672.7 L1726.1 674.2 L1700 685 L1709.6 658.4 L1711.8 663.9 L1805.6 574.8 Z" fill="#00b1ec" stroke="#00b1ec" stroke-width="0.8" stroke-linejoin="round" filter="url(#sh)"/><circle cx="1209.7" cy="559.7" r="14" fill="#38aedb" stroke="#1ab4ec" stroke-width="1.8" filter="url(#sh)"/><path d="M1207 556.2 L1210 554.2 L1210 565" fill="none" stroke="#fff" stroke-width="2.1" stroke-linejoin="miter"/><circle cx="1825.7" cy="559.7" r="14" fill="#38aedb" stroke="#1ab4ec" stroke-width="1.8" filter="url(#sh)"/><path d="M1822.6 557 Q1822.6 554.4 1825.6 554.4 Q1828.5 554.4 1828.5 557.2 Q1828.5 558.8 1826.6 560.6 L1822.6 564.3 L1829.2 564.3" fill="none" stroke="#fff" stroke-width="1.7"/></svg>
</body></html>
